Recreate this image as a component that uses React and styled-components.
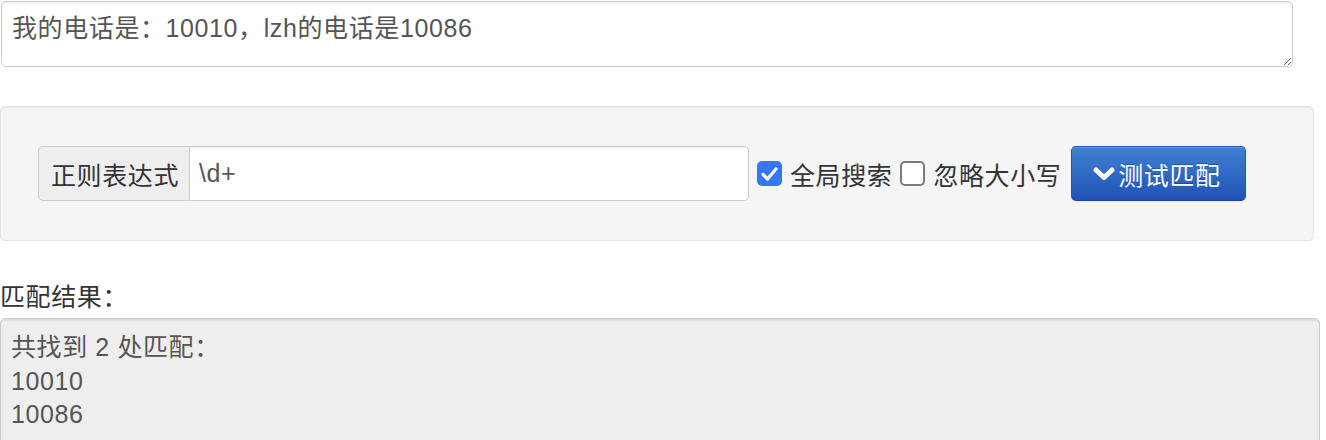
import React from "react";
import styled, { createGlobalStyle } from "styled-components";

const Global = createGlobalStyle`
  html, body { margin: 0; padding: 0; background: #fff; }
  body {
    font-family: "Liberation Sans", "Noto Sans CJK SC", sans-serif;
    font-size: 25px;
    letter-spacing: 0.6px;
    color: #333;
  }
  * { box-sizing: border-box; }
`;

const Page = styled.div`
  padding: 1px 0 0 1px;
  width: 1326px;
`;

const SourceText = styled.textarea`
  display: block;
  width: 1292px;
  height: 66px;
  padding: 10px 10px 6px;
  margin: 0;
  font: inherit;
  letter-spacing: inherit;
  line-height: 33px;
  color: #555;
  background: #fff;
  border: 1px solid #ccc;
  border-radius: 5px;
  box-shadow: inset 0 1px 1px rgba(0, 0, 0, 0.075);
  resize: vertical;
  outline: none;
`;

const Well = styled.div`
  margin-top: 39px;
  margin-left: -1px;
  width: 1314px;
  padding: 39px 37px;
  background: #f5f5f5;
  border: 1px solid #e3e3e3;
  border-radius: 5px;
  box-shadow: inset 0 1px 1px rgba(0, 0, 0, 0.05);
  display: flex;
  align-items: center;
`;

const InputGroup = styled.div`
  display: flex;
  height: 55px;
`;

const Addon = styled.span`
  display: flex;
  align-items: center;
  padding: 0 12px;
  width: 152px;
  background: #eee;
  border: 1px solid #ccc;
  border-radius: 5px 0 0 5px;
  color: #333;
  white-space: nowrap;
`;

const PatternInput = styled.input`
  width: 559px;
  height: 55px;
  padding: 0 9px;
  margin: 0;
  font: inherit;
  letter-spacing: inherit;
  color: #555;
  background: #fff;
  border: 1px solid #ccc;
  border-left: none;
  border-radius: 0 5px 5px 0;
  box-shadow: inset 0 1px 1px rgba(0, 0, 0, 0.075);
  outline: none;
`;

const CheckLabel = styled.label`
  display: flex;
  align-items: center;
  margin-left: 8px;
  gap: 8px;
  color: #333;
  white-space: nowrap;
`;

const Box = styled.span`
  width: 25px;
  height: 25px;
  border-radius: 5px;
  display: flex;
  align-items: center;
  justify-content: center;
  background: ${(p) => (p.$on ? "#3478f6" : "#fff")};
  border: ${(p) => (p.$on ? "none" : "2px solid #7b7b7b")};
`;

const HiddenInput = styled.input`
  position: absolute;
  opacity: 0;
  width: 0;
  height: 0;
  margin: 0;
`;

const Button = styled.button`
  margin-left: 10px;
  width: 175px;
  height: 55px;
  display: flex;
  align-items: center;
  justify-content: center;
  gap: 3px;
  padding: 0 4px 0 0;
  font: inherit;
  letter-spacing: inherit;
  color: #fff;
  text-shadow: 0 -1px 0 rgba(0, 0, 0, 0.25);
  background: linear-gradient(to bottom, #3e82d2, #2152b6);
  border: 1px solid #2458b0;
  border-bottom-color: #1c469a;
  border-radius: 5px;
  box-shadow: inset 0 1px 0 rgba(255, 255, 255, 0.2), 0 1px 2px rgba(0, 0, 0, 0.05);
  cursor: pointer;
`;

const ResultLabel = styled.div`
  margin-top: 40px;
  margin-left: -1px;
  line-height: 33px;
  color: #333;
`;

const ResultBox = styled.div`
  margin-top: 4px;
  margin-left: -1px;
  width: 1320px;
  min-height: 140px;
  padding: 12px 10px;
  line-height: 33.5px;
  color: #555;
  background: #eee;
  border: 1px solid #ccc;
  border-radius: 5px;
  box-shadow: inset 0 2px 2px rgba(0, 0, 0, 0.08);
`;

const Check = () => (
  <svg width="17" height="14" viewBox="0 0 17 14">
    <path d="M2 7.5 L6.5 12 L15 2" fill="none" stroke="#fff" strokeWidth="3.2" strokeLinecap="round" strokeLinejoin="round" />
  </svg>
);

const Chevron = () => (
  <svg width="22" height="16" viewBox="0 0 22 16">
    <path d="M3 4 L11 11.5 L19 4" fill="none" stroke="#fff" strokeWidth="5" strokeLinecap="round" strokeLinejoin="round" />
  </svg>
);

export default function App() {
  const [global, setGlobal] = React.useState(true);
  const [ignore, setIgnore] = React.useState(false);
  return (
    <Page>
      <Global />
      <SourceText defaultValue="我的电话是：10010，lzh的电话是10086" />
      <Well>
        <InputGroup>
          <Addon>正则表达式</Addon>
          <PatternInput defaultValue="\d+" />
        </InputGroup>
        <CheckLabel>
          <HiddenInput type="checkbox" checked={global} onChange={() => setGlobal(!global)} />
          <Box $on={global}>{global && <Check />}</Box>
          全局搜索
        </CheckLabel>
        <CheckLabel>
          <HiddenInput type="checkbox" checked={ignore} onChange={() => setIgnore(!ignore)} />
          <Box $on={ignore}>{ignore && <Check />}</Box>
          忽略大小写
        </CheckLabel>
        <Button>
          <Chevron />
          测试匹配
        </Button>
      </Well>
      <ResultLabel>匹配结果：</ResultLabel>
      <ResultBox>
        <div>共找到 2 处匹配：</div>
        <div>10010</div>
        <div>10086</div>
      </ResultBox>
    </Page>
  );
}
